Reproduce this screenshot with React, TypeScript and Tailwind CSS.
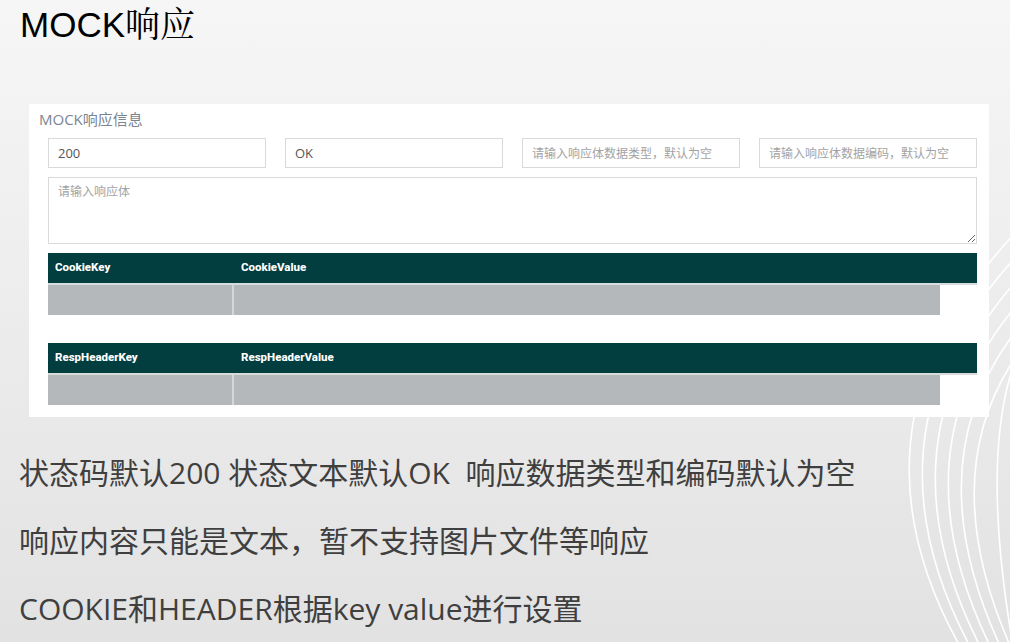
const notes: string[] = [
  "状态码默认200 状态文本默认OK  响应数据类型和编码默认为空",
  "响应内容只能是文本，暂不支持图片文件等响应",
  "COOKIE和HEADER根据key value进行设置",
]

const KvTable = ({ keyLabel, valueLabel }: { keyLabel: string; valueLabel: string }) => {
  return (
    <div className="flex flex-col">
      <div className="flex h-[32px] items-center bg-[#023d3f] border-b-2 border-[#d6dcdc] font-['Roboto',sans-serif] text-[11.5px] font-extrabold text-white">
        <div className="w-[185px] pl-[7px]">{keyLabel}</div>
        <div className="pl-[8px]">{valueLabel}</div>
      </div>
      <div className="flex h-[30px] w-[892px]">
        <div className="w-[184px] bg-[#b5b8ba]"></div>
        <div className="w-[2px] bg-[#d4d6d7]"></div>
        <div className="flex-1 bg-[#b5b8ba]"></div>
      </div>
    </div>
  )
}

const Decor = () => {
  const lines = [0, 1, 2, 3, 4, 5]
  return (
    <svg className="absolute left-0 top-0" width="1010" height="642" viewBox="0 0 1010 642" fill="none">
      {lines.map((i) => (
        <path
          key={i}
          d={`M ${1060 + i * 12} ${190 + i * 14} Q ${820 + i * 16} ${400} ${962 + i * 10} ${650}`}
          stroke="#ffffff"
          strokeWidth="1.6"
        />
      ))}
      <path d="M 1030 330 Q 975 420 1012 640" stroke="#ffffff" strokeWidth="1.6" />
    </svg>
  )
}

export default function App() {
  return (
    <div className="relative h-[642px] w-[1010px] overflow-hidden bg-linear-to-b from-[#f6f6f6] to-[#e2e2e2]">
      <Decor />
      <div className="relative flex flex-col">
        <h1 className="pl-[20px] pt-[5px] font-['Liberation_Sans','Noto_Serif_CJK_SC','Noto_Sans_CJK_SC',sans-serif] text-[35px] leading-[40px] font-normal text-black">
          MOCK响应
        </h1>

        <div className="ml-[29px] mt-[59px] flex h-[313px] w-[960px] flex-col bg-white pr-[12px] pl-[19px] font-['Open_Sans','Noto_Sans_CJK_SC',sans-serif]">
          <div className="-ml-[9px] pt-[5px] text-[15px] leading-[20px] text-[#7b8593]">MOCK响应信息</div>

          <div className="mt-[9px] grid grid-cols-4 gap-[19px]">
            <input
              className="h-[30px] border border-[#d9d9d9] px-[9px] text-[13px] text-[#555] outline-none placeholder:text-[#a3a3a3]"
              defaultValue="200"
            />
            <input
              className="h-[30px] border border-[#d9d9d9] px-[9px] text-[13px] text-[#555] outline-none placeholder:text-[#a3a3a3]"
              defaultValue="OK"
            />
            <input
              className="h-[30px] border border-[#d9d9d9] px-[9px] text-[12px] text-[#555] outline-none placeholder:text-[#a3a3a3]"
              placeholder="请输入响应体数据类型，默认为空"
            />
            <input
              className="h-[30px] border border-[#d9d9d9] px-[9px] text-[12px] text-[#555] outline-none placeholder:text-[#a3a3a3]"
              placeholder="请输入响应体数据编码，默认为空"
            />
          </div>

          <textarea
            className="mt-[9px] h-[67px] w-full border border-[#d9d9d9] px-[9px] py-[6px] text-[12px] leading-[16px] text-[#555] outline-none placeholder:text-[#a3a3a3]"
            placeholder="请输入响应体"
          />

          <div className="mt-[9px] flex flex-col gap-[28px]">
            <KvTable keyLabel="CookieKey" valueLabel="CookieValue" />
            <KvTable keyLabel="RespHeaderKey" valueLabel="RespHeaderValue" />
          </div>
        </div>

        <div className="mt-[36px] flex flex-col gap-[28px] pl-[19px] font-['Open_Sans','Noto_Sans_CJK_SC',sans-serif] text-[30px] leading-[40px] text-[#3f3f3f]">
          {notes.map((line) => (
            <div key={line} className="whitespace-pre">
              {line}
            </div>
          ))}
        </div>
      </div>
    </div>
  )
}
